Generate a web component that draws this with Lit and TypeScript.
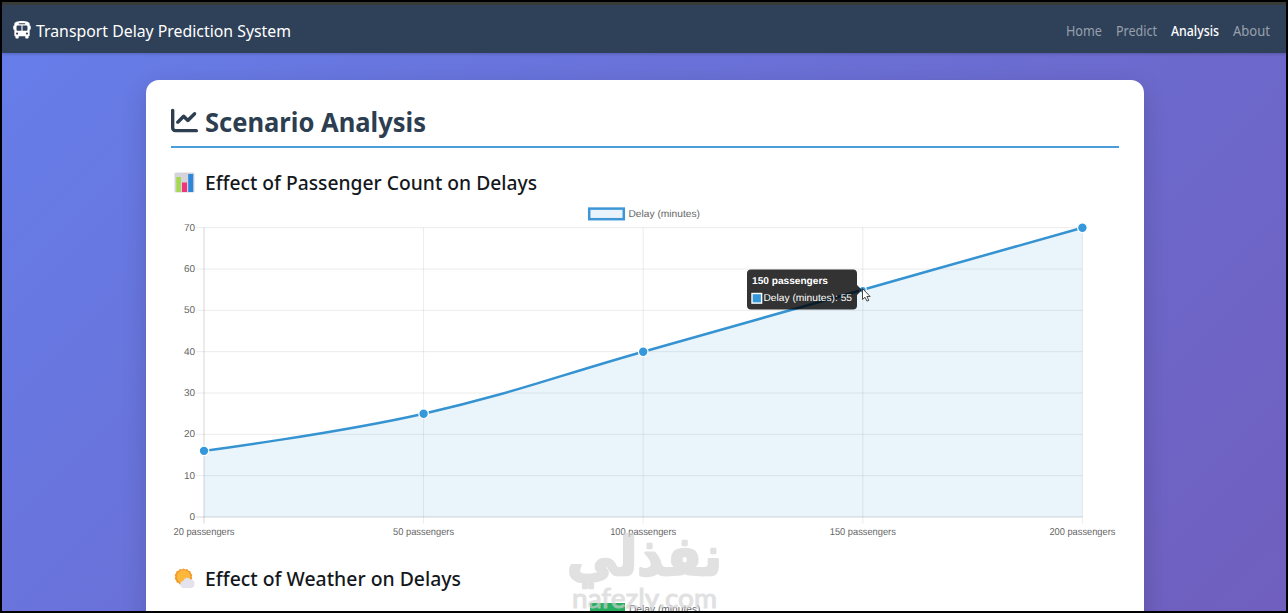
import { LitElement, html, svg, css } from "lit";
import { customElement, property } from "lit/decorators.js";

const POINTS = [
  { label: "20 passengers", value: 16, width: 61 },
  { label: "50 passengers", value: 25, width: 61 },
  { label: "100 passengers", value: 40, width: 66 },
  { label: "150 passengers", value: 55, width: 66 },
  { label: "200 passengers", value: 70, width: 66 },
];

/** Single line of text set to an exact width. */
@customElement("fit-text")
export class FitText extends LitElement {
  @property() text = "";
  @property({ type: Number }) width = 100;
  @property({ type: Number }) height = 30;
  @property({ type: Number }) baseline = 20;

  static styles = css`
    :host { display: block; flex: none; }
    svg { display: block; overflow: visible; fill: currentColor; }
  `;

  render() {
    return html`<svg width=${this.width} height=${this.height}>
      <text x="0" y=${this.baseline} textLength=${this.width} lengthAdjust="spacingAndGlyphs">${this.text}</text>
    </svg>`;
  }
}

@customElement("delay-chart")
export class DelayChart extends LitElement {
  static styles = css`
    :host { display: block; font-family: "Liberation Sans", Arial, sans-serif; }
    svg { display: block; overflow: visible; }
    text { text-rendering: geometricPrecision; }
    .grid { stroke: rgba(0, 0, 0, 0.08); stroke-width: 1; }
    .axis { stroke: rgba(0, 0, 0, 0.16); stroke-width: 1; }
    .tick { fill: #666; font-size: 10px; }
    .area { fill: #3498db; fill-opacity: 0.1; }
    .line { fill: none; stroke: #3593d2; stroke-width: 2.5; }
    .dot { fill: #3498db; stroke: #fff; stroke-width: 1.2; }
    .swatch { fill: #e9f3fb; stroke: #3f96d6; stroke-width: 2.5; }
    .tip { fill: rgba(0, 0, 0, 0.8); }
    .tip-text { fill: #fff; font-size: 10px; }
    .tip-title { fill: #fff; font-size: 10px; font-weight: 700; }
    .tip-box { fill: #3498db; stroke: #fff; stroke-width: 1.4; }
    .cursor { fill: #fff; stroke: #333; stroke-width: 0.9; }
  `;

  private x(i: number) {
    return 33 + i * 219.6;
  }

  private y(v: number) {
    return 317 - (v * 289.3) / 70;
  }

  private curve() {
    const p = POINTS.map((d, i) => ({ x: this.x(i), y: this.y(d.value) }));
    const handles = p.map((c, i) => {
      const a = p[i - 1] ?? c;
      const b = p[i + 1] ?? c;
      const d0 = Math.hypot(c.x - a.x, c.y - a.y);
      const d1 = Math.hypot(b.x - c.x, b.y - c.y);
      const f0 = (0.4 * d0) / (d0 + d1);
      const f1 = (0.4 * d1) / (d0 + d1);
      if (i === 0 || i === p.length - 1) return { in: c, out: c };
      return {
        in: { x: c.x - f0 * (b.x - a.x), y: c.y - f0 * (b.y - a.y) },
        out: { x: c.x + f1 * (b.x - a.x), y: c.y + f1 * (b.y - a.y) },
      };
    });
    let d = `M${p[0].x} ${p[0].y}`;
    for (let i = 1; i < p.length; i++) {
      const o = handles[i - 1].out;
      const n = handles[i].in;
      d += `C${o.x} ${o.y} ${n.x} ${n.y} ${p[i].x} ${p[i].y}`;
    }
    return d;
  }

  render() {
    const curve = this.curve();
    const base = this.y(0);
    return html`<svg width="947" height="345" viewBox="0 0 947 345">
      <rect class="swatch" x="418.2" y="8.6" width="34.6" height="10.6"></rect>
      <text class="tick" x="457.5" y="16.8" textLength="71.500" lengthAdjust="spacingAndGlyphs">Delay (minutes)</text>
      ${[0, 10, 20, 30, 40, 50, 60, 70].map(
        (v) => svg`
          <line class=${v ? "grid" : "axis"} x1="25" x2="911.5" y1=${this.y(v)} y2=${this.y(v)}></line>
          <text class="tick" x="24" y=${this.y(v) + 3} text-anchor="end">${v}</text>`
      )}
      ${POINTS.map(
        (p, i) => svg`
          <line class=${i ? "grid" : "axis"} x1=${this.x(i)} x2=${this.x(i)} y1="27.500" y2="323.5"></line>
          <text class="tick" x=${this.x(i)} y="335" text-anchor="middle" textLength=${p.width} lengthAdjust="spacingAndGlyphs">${p.label}</text>`
      )}
      <path class="area" d="${curve}L${this.x(4)} ${base}L${this.x(0)} ${base}Z"></path>
      <path class="line" d=${curve}></path>
      ${POINTS.map((p, i) => svg`<circle class="dot" cx=${this.x(i)} cy=${this.y(p.value)} r=${i === 3 ? 3.4 : 4.8}></circle>`)}
      <path class="tip" d="M580 69.500H682Q686 69.500 686 73.500V85L691 90L686 95V105.500Q686 109.500 682 109.500H580Q576 109.500 576 105.500V73.500Q576 69.500 580 69.500Z"></path>
      <text class="tip-title" x="581" y="83.800" textLength="76" lengthAdjust="spacingAndGlyphs">150 passengers</text>
      <rect class="tip-box" x="581" y="93.500" width="9.600" height="9.600"></rect>
      <text class="tip-text" x="592.500" y="101.200" textLength="88.500" lengthAdjust="spacingAndGlyphs">Delay (minutes): 55</text>
      <path class="cursor" d="M691.500 88.500V99.500L694 97.300L696 101.200L697.800 100.300L695.900 96.500H699.100Z"></path>
    </svg>`;
  }
}

@customElement("app-root")
export class AppRoot extends LitElement {
  static styles = css`
    :host {
      display: block;
      font-family: "Noto Sans", "Open Sans", sans-serif;
    }
    * { box-sizing: border-box; }
    .page {
      position: relative;
      height: 613px;
      border: 2px solid #000;
      overflow: hidden;
      background: linear-gradient(135deg, #667eea 0%, #764ba2 100%) 0 0 / 1284px 1800px no-repeat;
      display: flex;
      flex-direction: column;
    }
    .nav {
      flex: none;
      height: 51px;
      border-top: 3px solid #393b38;
      background: #2f4159;
      display: flex;
      align-items: center;
      justify-content: space-between;
      padding: 2px 16px 0 10px;
      box-shadow: 0 1px 3px rgba(0, 0, 0, 0.2);
    }
    .brand { display: flex; align-items: center; gap: 4px; color: #fff; font-size: 17px; }
    .brand svg { display: block; }
    .links { display: flex; gap: 14px; font-size: 13.5px; color: #97a0ac; }
    .active { color: #fff; font-weight: 500; }
    .card {
      flex: none;
      width: 998px;
      height: 700px;
      margin: 27px 0 0 144px;
      padding: 24px 25px;
      background: #fff;
      border-radius: 13px;
      box-shadow: 0 8px 26px rgba(0, 0, 0, 0.16);
    }
    .title {
      display: flex;
      gap: 7px;
      height: 44px;
      border-bottom: 2px solid #4a9dd8;
      color: #2c3e50;
      font-size: 27px;
      font-weight: 700;
    }
    .title svg { margin-top: 3px; }
    .section { display: flex; gap: 10px; color: #14181c; font-size: 19.6px; font-weight: 500; height: 32px; padding-left: 3px; }
    .first { margin-top: 20px; height: 32px; }
    .section svg { margin-top: 4px; flex: none; }
    .weather { margin-top: 19px; }
    .legend {
      display: flex;
      justify-content: center;
      gap: 4px;
      margin-top: 7px;
      font-family: "Liberation Sans", Arial, sans-serif;
      font-size: 10px;
      color: #666;
    }
    .key { width: 35px; height: 12px; background: #27ae60; }
    .mark { position: absolute; left: 562px; top: 526px; overflow: visible; opacity: 0.66; }
    .mark text { fill: #d2d2d2; stroke: #d2d2d2; stroke-linejoin: round; }
    .arabic { font-family: "DejaVu Sans", sans-serif; font-weight: 700; font-size: 54px; stroke-width: 2.5px; }
    .latin { font-family: Lato, sans-serif; font-weight: 400; font-size: 27px; stroke-width: 1px; }
  `;

  render() {
    return html`<div class="page">
      <nav class="nav">
        <div class="brand">
          <svg width="20" height="17.500" viewBox="0 0 576 512" fill="#fff">
            <path d="M288 0C422.400 0 512 35.200 512 80l0 16 0 32c17.700 0 32 14.300 32 32l0 64c0 17.700-14.300 32-32 32l0 160c0 17.700-14.300 32-32 32l0 32c0 17.700-14.300 32-32 32l-32 0c-17.700 0-32-14.300-32-32l0-32-192 0 0 32c0 17.700-14.300 32-32 32l-32 0c-17.700 0-32-14.300-32-32l0-32c-17.700 0-32-14.300-32-32l0-160c-17.700 0-32-14.300-32-32l0-64c0-17.700 14.300-32 32-32l0-32 0-16C64 35.200 153.600 0 288 0zM128 160l0 96c0 17.700 14.300 32 32 32l112 0 0-160-112 0c-17.700 0-32 14.300-32 32zM304 288l112 0c17.700 0 32-14.300 32-32l0-96c0-17.700-14.300-32-32-32l-112 0 0 160zM144 400a32 32 0 1 0 0-64 32 32 0 1 0 0 64zm288 0a32 32 0 1 0 0-64 32 32 0 1 0 0 64zM384 80c0-8.800-7.200-16-16-16L208 64c-8.800 0-16 7.200-16 16s7.200 16 16 16l160 0c8.800 0 16-7.200 16-16z"></path>
          </svg>
          <fit-text text="Transport Delay Prediction System" width="255" height="24" baseline="19"></fit-text>
        </div>
        <div class="links">
          <fit-text text="Home" width="36" height="20" baseline="16"></fit-text>
          <fit-text text="Predict" width="41" height="20" baseline="16"></fit-text>
          <fit-text class="active" text="Analysis" width="48" height="20" baseline="16"></fit-text>
          <fit-text text="About" width="37" height="20" baseline="16"></fit-text>
        </div>
      </nav>
      <main class="card">
        <div class="title">
          <svg width="27" height="27" viewBox="0 0 512 512" fill="#2c3e50">
            <path d="M64 64c0-17.700-14.300-32-32-32S0 46.300 0 64L0 400c0 44.200 35.800 80 80 80l400 0c17.700 0 32-14.300 32-32s-14.300-32-32-32L80 416c-8.800 0-16-7.200-16-16L64 64zm406.600 86.600c12.500-12.500 12.500-32.800 0-45.300s-32.800-12.500-45.300 0L320 210.700l-57.400-57.400c-12.500-12.500-32.800-12.500-45.300 0l-112 112c-12.500 12.500-12.500 32.800 0 45.300s32.800 12.500 45.300 0L240 221.300l57.400 57.400c12.500 12.500 32.800 12.500 45.300 0l128-128z"></path>
          </svg>
          <fit-text text="Scenario Analysis" width="221" height="36" baseline="27.500"></fit-text>
        </div>
        <div class="section first">
          <svg width="21" height="21" viewBox="0 0 21 21">
            <rect x="0.500" y="0.500" width="20" height="20" rx="1.500" fill="#d5d4dc"></rect>
            <rect x="2.300" y="5" width="4.600" height="15" fill="#a5d84f"></rect>
            <rect x="8" y="10.500" width="5" height="9.500" fill="#f0347f"></rect>
            <rect x="14.200" y="2" width="5" height="18" fill="#2d86d8"></rect>
          </svg>
          <fit-text text="Effect of Passenger Count on Delays" width="332" height="30" baseline="22"></fit-text>
        </div>
        <delay-chart></delay-chart>
        <div class="section weather">
          <svg width="21" height="21" viewBox="0 0 21 21">
            <path d="M9.500 0.500L11.300 1.500L13.300 1L14.500 2.700L16.500 3.300L16.900 5.300L18.300 6.800L17.700 8.800L18.300 10.800L16.900 12.300L16.500 14.300L14.500 14.900L13.300 16.600L11.300 16.100L9.500 17.100L7.700 16.100L5.700 16.600L4.500 14.900L2.500 14.300L2.100 12.300L0.700 10.800L1.300 8.800L0.700 6.800L2.100 5.300L2.500 3.300L4.500 2.700L5.700 1L7.700 1.500Z" fill="#f19a2d"></path>
            <circle cx="9.500" cy="8.800" r="6.700" fill="#fcb83b"></circle>
            <path d="M9.500 20A3.700 3.700 0 0 1 9.300 12.700A4.300 4.300 0 0 1 16.800 11.500A4.300 4.300 0 0 1 17 20Z" fill="#e4e2ec"></path>
          </svg>
          <fit-text text="Effect of Weather on Delays" width="256" height="30" baseline="21.500"></fit-text>
        </div>
        <div class="legend"><span class="key"></span><fit-text text="Delay (minutes)" width="71.500" height="12" baseline="9.500"></fit-text></div>
      </main>
      <svg class="mark" width="160" height="83">
        <text class="arabic" x="3" y="47" textLength="155" lengthAdjust="spacingAndGlyphs">نفذلي</text>
        <text class="latin" x="8" y="80" textLength="145" lengthAdjust="spacingAndGlyphs">nafezly.com</text>
      </svg>
    </div>`;
  }
}
